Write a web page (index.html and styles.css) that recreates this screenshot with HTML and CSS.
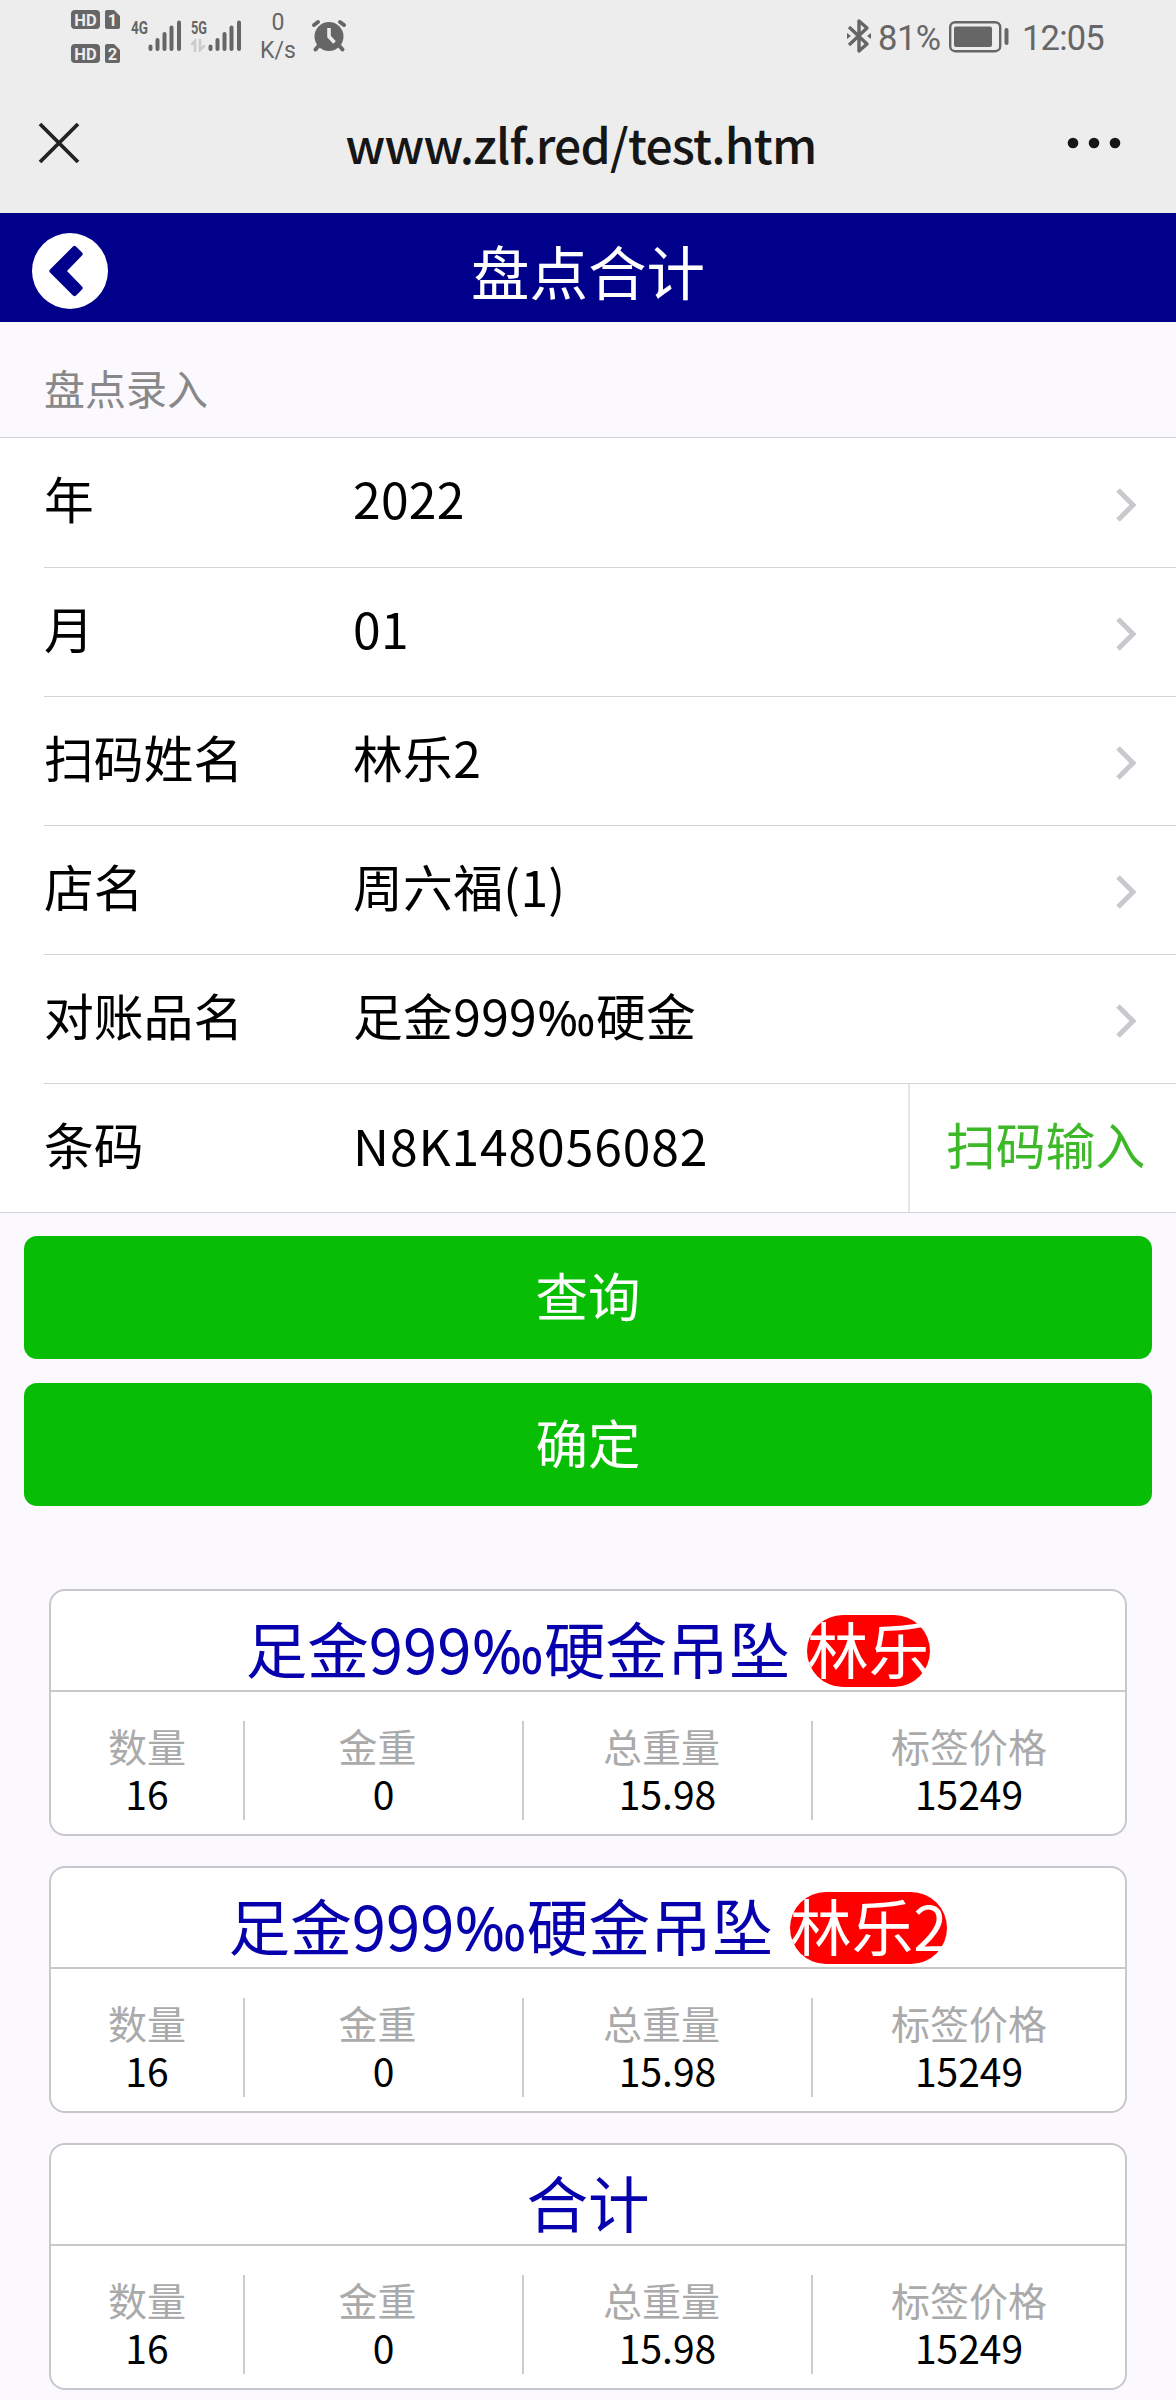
FILE: index.html
```html
<!DOCTYPE html>
<html lang="zh-CN">

<head>
    <meta charset="UTF-8">
    <title>盘点合计</title>
    <link rel="stylesheet" href="styles.css">
</head>

<body>
    <!-- 手机状态栏 -->
    <div class="status">
        <svg class="hd" width="50" height="54" viewBox="0 0 50 54">
            <g fill="#666">
                <rect x="0" y="0" width="29" height="19" rx="4" />
                <path d="M36 0h7l6 6v11q0 2-2 2h-11q-2 0-2-2v-15q0-2 2-2z" />
                <rect x="0" y="34" width="29" height="19" rx="4" />
                <path d="M36 34h7l6 6v11q0 2-2 2h-11q-2 0-2-2v-15q0-2 2-2z" />
            </g>
            <g class="hd_txt">
                <text x="14.5" y="15.5">HD</text>
                <text x="41.5" y="15.5">1</text>
                <text x="14.5" y="49.5">HD</text>
                <text x="41.5" y="49.5">2</text>
            </g>
        </svg>
        <svg class="signal" width="51" height="32" viewBox="0 0 51 32">
            <text class="net" x="0" y="14" textLength="17" lengthAdjust="spacingAndGlyphs">4G</text>
            <path d="M19.5 26.500v2.500M26.500 20v9M33.500 14v15M40.500 7.500v21.500M48 2.500v26.500" />
        </svg>
        <svg class="signal" width="51" height="32" viewBox="0 0 51 32">
            <text class="net" x="0" y="14" textLength="16" lengthAdjust="spacingAndGlyphs">5G</text>
            <path class="faint" d="M1 24l3-3v10M9 20v10l4-4" />
            <path d="M19.5 26.500v2.500M26.500 20v9M33.500 14v15M40.500 7.500v21.500M48 2.500v26.500" />
        </svg>
        <div class="speed">
            <span>0</span>
            <span>K/s</span>
        </div>
        <svg class="alarm" width="34" height="32" viewBox="0 0 34 32">
            <circle cx="17" cy="16.500" r="14.500" fill="#666" />
            <path d="M2 5l4-3M32 5l-4-3M6.500 26l-3 3.500M27.500 26l3 3.500" stroke="#666" stroke-width="4" stroke-linecap="round" />
            <path d="M17 8v8.500l5.500 6" fill="none" stroke="#ededed" stroke-width="3.600" />
        </svg>
        <svg class="bluetooth" width="26" height="34" viewBox="0 0 26 34">
            <path d="M3 8l18 17l-8 7v-30l8 7l-18 17" fill="none" stroke="#666" stroke-width="3.400" stroke-linejoin="round" />
            <path d="M1 14l4 3l-4 3zM25 14l-4 3l4 3z" fill="#666" />
        </svg>
        <span class="percent">81%</span>
        <svg class="battery" width="60" height="32" viewBox="0 0 60 32">
            <rect x="1.200" y="1.200" width="50" height="29" rx="5" fill="none" stroke="#666" stroke-width="2.400" />
            <rect x="5" y="5.500" width="38" height="20.500" rx="2" fill="#666" />
            <rect x="55.500" y="7" width="4" height="17" rx="2" fill="#666" />
        </svg>
        <span class="time">12:05</span>
    </div>

    <div class="nav">
        <svg width="42" height="42" viewBox="0 0 42 42">
            <path d="M2 2l38 38M40 2l-38 38" stroke="#222" stroke-width="3.800" />
        </svg>
        <p class="url">www.zlf.red/test.htm</p>
        <svg width="54" height="12" viewBox="0 0 54 12" fill="#161616">
            <circle cx="6" cy="6" r="5.300" />
            <circle cx="27" cy="6" r="5.300" />
            <circle cx="48" cy="6" r="5.300" />
        </svg>
    </div>

    <div class="header">
        <svg width="76" height="76" viewBox="0 0 76 76">
            <circle cx="38" cy="38" r="38" fill="#fff" />
            <path d="M41 13.500q1.500-1.500 3 0l6 6q1.500 1.500 0 3l-15 15.500l15 15.500q1.500 1.500 0 3l-6 6q-1.500 1.500-3 0l-23-23q-1.500-1.500 0-3z" fill="#00008b" />
        </svg>
        <h1>盘点合计</h1>
    </div>

    <h2 class="cells_title">盘点录入</h2>

    <div class="cells">
        <div class="cell">
            <label>年</label>
            <span class="value">2022</span>
            <svg class="arrow" viewBox="0 0 20 34"><path d="M2 2l15 15l-15 15" /></svg>
        </div>
        <div class="cell">
            <label>月</label>
            <span class="value">01</span>
            <svg class="arrow" viewBox="0 0 20 34"><path d="M2 2l15 15l-15 15" /></svg>
        </div>
        <div class="cell">
            <label>扫码姓名</label>
            <span class="value">林乐2</span>
            <svg class="arrow" viewBox="0 0 20 34"><path d="M2 2l15 15l-15 15" /></svg>
        </div>
        <div class="cell">
            <label>店名</label>
            <span class="value">周六福(1)</span>
            <svg class="arrow" viewBox="0 0 20 34"><path d="M2 2l15 15l-15 15" /></svg>
        </div>
        <div class="cell">
            <label>对账品名</label>
            <span class="value">足金999<i>‰</i>硬金</span>
            <svg class="arrow" viewBox="0 0 20 34"><path d="M2 2l15 15l-15 15" /></svg>
        </div>
        <div class="cell">
            <label>条码</label>
            <span class="value code">N8K148056082</span>
            <a class="scan">扫码输入</a>
        </div>
    </div>

    <div class="btns">
        <a class="btn">查询</a>
        <a class="btn">确定</a>
    </div>

    <div class="list">
        <div class="card">
            <h3>足金999<i>‰</i>硬金吊坠 <span class="badge">林乐</span></h3>
            <ul>
                <li><em>数量</em>16</li>
                <li><em>金重</em>0</li>
                <li><em>总重量</em>15.98</li>
                <li><em>标签价格</em>15249</li>
            </ul>
        </div>
        <div class="card">
            <h3>足金999<i>‰</i>硬金吊坠 <span class="badge">林乐2</span></h3>
            <ul>
                <li><em>数量</em>16</li>
                <li><em>金重</em>0</li>
                <li><em>总重量</em>15.98</li>
                <li><em>标签价格</em>15249</li>
            </ul>
        </div>
        <div class="card">
            <h3>合计</h3>
            <ul>
                <li><em>数量</em>16</li>
                <li><em>金重</em>0</li>
                <li><em>总重量</em>15.98</li>
                <li><em>标签价格</em>15249</li>
            </ul>
        </div>
    </div>
</body>

</html>
```
FILE: styles.css
```css
* {
    margin: 0;
    padding: 0;
    box-sizing: border-box;
}

body {
    width: 1176px;
    height: 2400px;
    overflow: hidden;
    background: #fbf9fe;
    color: #000;
    font-family: "Noto Sans CJK SC", sans-serif;
}

svg {
    display: block;
    flex-shrink: 0;
    overflow: visible;
}

/* 千分号 */
i {
    font-family: "Noto Sans", sans-serif;
    font-style: normal;
    line-height: 1;
}

/* 状态栏 */
.status {
    display: flex;
    align-items: flex-start;
    height: 76px;
    padding: 10px 0 0 71px;
    background: #ededed;
    color: #666;
    font-family: Roboto, sans-serif;
}

.hd_txt {
    fill: #ededed;
    font-size: 16.5px;
    font-weight: bold;
    text-anchor: middle;
}

.signal {
    margin: 10px 0 0 9.5px;
}

.signal path {
    fill: none;
    stroke: #666;
    stroke-width: 4;
    stroke-linecap: round;
}

.signal .faint {
    stroke: #ccc;
    stroke-width: 2.5;
}

.net {
    fill: #666;
    font-size: 19px;
    font-weight: bold;
}

.speed {
    display: flex;
    flex-direction: column;
    width: 50px;
    margin: -1px 0 0 11px;
    font-size: 23px;
    line-height: 28px;
    text-align: center;
}

.alarm {
    margin: 10px 0 0 9px;
}

.bluetooth {
    margin: 9px 6px 0 500px;
}

.percent,
.time {
    margin-top: 8px;
    font-size: 34.5px;
    font-weight: 400;
    line-height: 41px;
    white-space: nowrap;
}

.percent {
    width: 63px;
    letter-spacing: -0.5px;
}

.battery {
    margin: 11px 13px 0 8px;
}

.time {
    letter-spacing: -0.8px;
}

/* 网址栏 */
.nav {
    display: flex;
    align-items: center;
    height: 137px;
    padding: 0 55px 4px 38px;
    background: #ededed;
}

.url {
    flex: 1;
    padding: 1px 0 0 15px;
    color: #161616;
    font-size: 48px;
    font-weight: 500;
    letter-spacing: -0.8px;
    text-align: center;
}

.header {
    display: flex;
    align-items: center;
    height: 109px;
    padding: 0 108px 0 32px;
    background: #00008b;
}

.header svg {
    margin-top: 7px;
}

.header h1 {
    flex: 1;
    padding-top: 5px;
    color: #fff;
    font-size: 58.5px;
    font-weight: normal;
    line-height: 104px;
    text-align: center;
}

/* 录入表单 */
.cells_title {
    height: 115px;
    padding: 34px 0 0 44px;
    color: #888;
    font-size: 41px;
    font-weight: normal;
    line-height: 62px;
}

.cells {
    border-top: 1px solid #d5d5d8;
    border-bottom: 1px solid #d5d5d8;
    background: #fff;
}

.cell {
    display: flex;
    align-items: center;
    height: 129.05px;
    margin-left: 44px;
    padding-right: 40px;
    font-size: 49.8px;
    line-height: 70px;
}

.cell + .cell {
    border-top: 1px solid #d5d5d8;
}

.cell label {
    width: 309px;
    margin-top: -11px;
}

.value {
    flex: 1;
    margin-top: -11px;
    letter-spacing: 0.3px;
}

.arrow {
    width: 20px;
    height: 34px;
    margin-top: 4px;
}

.arrow path {
    fill: none;
    stroke: #c8c8cd;
    stroke-width: 5;
}

.code {
    margin-top: -9px;
    letter-spacing: 0.9px;
}

.scan {
    align-self: stretch;
    width: 268px;
    margin-right: -40px;
    padding-left: 36px;
    border-left: 2px solid #e5e5e5;
    color: #3db828;
    line-height: 118px;
}

.btns {
    display: flex;
    flex-direction: column;
    gap: 24px;
    padding: 23px 24px 0;
}

.btn {
    height: 123px;
    border-radius: 13px;
    background: #07be05;
    color: #fff;
    font-size: 52.5px;
    line-height: 117px;
    text-align: center;
}

/* 汇总列表 */
.list {
    display: flex;
    flex-direction: column;
    gap: 29.7px;
    padding: 83px 49px 0;
}

.card {
    height: 247px;
    border: 2px solid #c8c8cc;
    border-radius: 16px;
    background: #fff;
}

.card h3 {
    height: 101px;
    padding-top: 11px;
    border-bottom: 2px solid #c8c8c8;
    color: #0600ad;
    font-size: 61.6px;
    font-weight: normal;
    line-height: 92px;
    text-align: center;
    white-space: nowrap;
}

.badge {
    display: inline-block;
    height: 72px;
    margin-left: 3px;
    border-radius: 36px;
    background: #f00;
    color: #fff;
    line-height: 66px;
}

.card ul {
    display: grid;
    grid-template-columns: 194px 279px 289px 1fr;
    padding-top: 29px;
    list-style: none;
}

.card li {
    height: 99px;
    border-right: 2px solid #ccc;
    font-size: 39px;
    line-height: 48px;
    text-align: center;
}

.card li:last-child {
    border-right: 0;
}

.card em {
    display: block;
    color: #aaa;
    font-style: normal;
}

.card li:nth-child(2) em,
.card li:nth-child(3) em {
    padding-right: 12px;
}
```
